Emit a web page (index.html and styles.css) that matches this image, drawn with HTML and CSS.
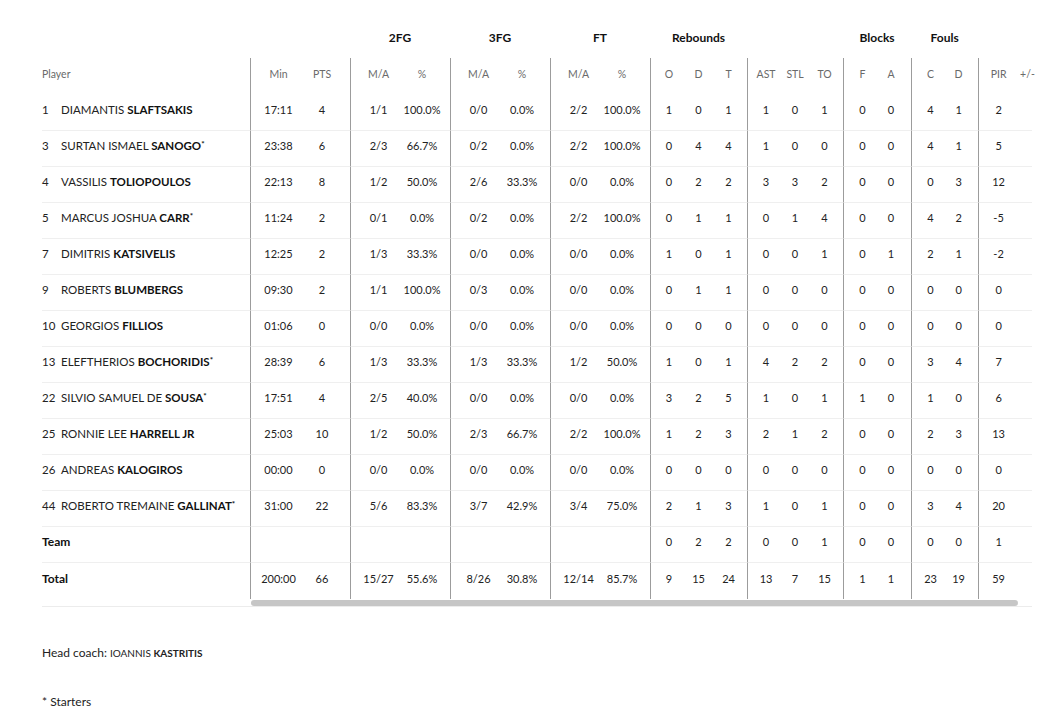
FILE: index.html
```html
<!DOCTYPE html>
<html lang="en">
<head>
<meta charset="utf-8">
<title>Box score</title>
<link rel="stylesheet" href="styles.css">
</head>
<body>
<div class="page">
  <div class="box">
    <table class="stats">
      <colgroup>
        <col class="c-player"><col class="c50"><col class="c50">
        <col class="c50"><col class="c50"><col class="c50"><col class="c50"><col class="c50"><col class="c50">
        <col class="c33"><col class="c31"><col class="c33">
        <col class="c33"><col class="c30"><col class="c33">
        <col class="c34"><col class="c34">
        <col class="c34"><col class="c33">
        <col class="c40"><col class="c14">
      </colgroup>
      <thead>
        <tr class="groups">
          <th></th><th colspan="2"></th>
          <th colspan="2">2FG</th><th colspan="2">3FG</th><th colspan="2">FT</th>
          <th colspan="3">Rebounds</th><th colspan="3"></th>
          <th colspan="2">Blocks</th><th colspan="2">Fouls</th><th colspan="2"></th>
        </tr>
        <tr class="labels">
          <th class="player">Player</th>
          <th class="gs pl">Min</th><th class="pr">PTS</th>
          <th class="gs pl">M/A</th><th class="pr">%</th>
          <th class="gs pl">M/A</th><th class="pr">%</th>
          <th class="gs pl">M/A</th><th class="pr">%</th>
          <th class="gs pl4">O</th><th>D</th><th class="pr4">T</th>
          <th class="gs pl4">AST</th><th>STL</th><th class="pr4">TO</th>
          <th class="gs pl4">F</th><th class="pr6">A</th>
          <th class="gs pl4">C</th><th class="pr6">D</th>
          <th class="gs">PIR</th><th class="pm">+/-</th>
        </tr>
      </thead>
      <tbody>
        <tr><td class="player"><span class="num">1</span>DIAMANTIS <b>SLAFTSAKIS</b></td>
          <td class="gs pl">17:11</td><td class="pr">4</td>
          <td class="gs pl">1/1</td><td class="pr">100.0%</td>
          <td class="gs pl">0/0</td><td class="pr">0.0%</td>
          <td class="gs pl">2/2</td><td class="pr">100.0%</td>
          <td class="gs pl4">1</td><td>0</td><td class="pr4">1</td>
          <td class="gs pl4">1</td><td>0</td><td class="pr4">1</td>
          <td class="gs pl4">0</td><td class="pr6">0</td>
          <td class="gs pl4">4</td><td class="pr6">1</td>
          <td class="gs">2</td><td class="pm"></td></tr>
        <tr><td class="player"><span class="num">3</span>SURTAN ISMAEL <b>SANOGO<sup>*</sup></b></td>
          <td class="gs pl">23:38</td><td class="pr">6</td>
          <td class="gs pl">2/3</td><td class="pr">66.7%</td>
          <td class="gs pl">0/2</td><td class="pr">0.0%</td>
          <td class="gs pl">2/2</td><td class="pr">100.0%</td>
          <td class="gs pl4">0</td><td>4</td><td class="pr4">4</td>
          <td class="gs pl4">1</td><td>0</td><td class="pr4">0</td>
          <td class="gs pl4">0</td><td class="pr6">0</td>
          <td class="gs pl4">4</td><td class="pr6">1</td>
          <td class="gs">5</td><td class="pm"></td></tr>
        <tr><td class="player"><span class="num">4</span>VASSILIS <b>TOLIOPOULOS</b></td>
          <td class="gs pl">22:13</td><td class="pr">8</td>
          <td class="gs pl">1/2</td><td class="pr">50.0%</td>
          <td class="gs pl">2/6</td><td class="pr">33.3%</td>
          <td class="gs pl">0/0</td><td class="pr">0.0%</td>
          <td class="gs pl4">0</td><td>2</td><td class="pr4">2</td>
          <td class="gs pl4">3</td><td>3</td><td class="pr4">2</td>
          <td class="gs pl4">0</td><td class="pr6">0</td>
          <td class="gs pl4">0</td><td class="pr6">3</td>
          <td class="gs">12</td><td class="pm"></td></tr>
        <tr><td class="player"><span class="num">5</span>MARCUS JOSHUA <b>CARR<sup>*</sup></b></td>
          <td class="gs pl">11:24</td><td class="pr">2</td>
          <td class="gs pl">0/1</td><td class="pr">0.0%</td>
          <td class="gs pl">0/2</td><td class="pr">0.0%</td>
          <td class="gs pl">2/2</td><td class="pr">100.0%</td>
          <td class="gs pl4">0</td><td>1</td><td class="pr4">1</td>
          <td class="gs pl4">0</td><td>1</td><td class="pr4">4</td>
          <td class="gs pl4">0</td><td class="pr6">0</td>
          <td class="gs pl4">4</td><td class="pr6">2</td>
          <td class="gs">-5</td><td class="pm"></td></tr>
        <tr><td class="player"><span class="num">7</span>DIMITRIS <b>KATSIVELIS</b></td>
          <td class="gs pl">12:25</td><td class="pr">2</td>
          <td class="gs pl">1/3</td><td class="pr">33.3%</td>
          <td class="gs pl">0/0</td><td class="pr">0.0%</td>
          <td class="gs pl">0/0</td><td class="pr">0.0%</td>
          <td class="gs pl4">1</td><td>0</td><td class="pr4">1</td>
          <td class="gs pl4">0</td><td>0</td><td class="pr4">1</td>
          <td class="gs pl4">0</td><td class="pr6">1</td>
          <td class="gs pl4">2</td><td class="pr6">1</td>
          <td class="gs">-2</td><td class="pm"></td></tr>
        <tr><td class="player"><span class="num">9</span>ROBERTS <b>BLUMBERGS</b></td>
          <td class="gs pl">09:30</td><td class="pr">2</td>
          <td class="gs pl">1/1</td><td class="pr">100.0%</td>
          <td class="gs pl">0/3</td><td class="pr">0.0%</td>
          <td class="gs pl">0/0</td><td class="pr">0.0%</td>
          <td class="gs pl4">0</td><td>1</td><td class="pr4">1</td>
          <td class="gs pl4">0</td><td>0</td><td class="pr4">0</td>
          <td class="gs pl4">0</td><td class="pr6">0</td>
          <td class="gs pl4">0</td><td class="pr6">0</td>
          <td class="gs">0</td><td class="pm"></td></tr>
        <tr><td class="player"><span class="num">10</span>GEORGIOS <b>FILLIOS</b></td>
          <td class="gs pl">01:06</td><td class="pr">0</td>
          <td class="gs pl">0/0</td><td class="pr">0.0%</td>
          <td class="gs pl">0/0</td><td class="pr">0.0%</td>
          <td class="gs pl">0/0</td><td class="pr">0.0%</td>
          <td class="gs pl4">0</td><td>0</td><td class="pr4">0</td>
          <td class="gs pl4">0</td><td>0</td><td class="pr4">0</td>
          <td class="gs pl4">0</td><td class="pr6">0</td>
          <td class="gs pl4">0</td><td class="pr6">0</td>
          <td class="gs">0</td><td class="pm"></td></tr>
        <tr><td class="player"><span class="num">13</span>ELEFTHERIOS <b>BOCHORIDIS<sup>*</sup></b></td>
          <td class="gs pl">28:39</td><td class="pr">6</td>
          <td class="gs pl">1/3</td><td class="pr">33.3%</td>
          <td class="gs pl">1/3</td><td class="pr">33.3%</td>
          <td class="gs pl">1/2</td><td class="pr">50.0%</td>
          <td class="gs pl4">1</td><td>0</td><td class="pr4">1</td>
          <td class="gs pl4">4</td><td>2</td><td class="pr4">2</td>
          <td class="gs pl4">0</td><td class="pr6">0</td>
          <td class="gs pl4">3</td><td class="pr6">4</td>
          <td class="gs">7</td><td class="pm"></td></tr>
        <tr><td class="player"><span class="num">22</span>SILVIO SAMUEL DE <b>SOUSA<sup>*</sup></b></td>
          <td class="gs pl">17:51</td><td class="pr">4</td>
          <td class="gs pl">2/5</td><td class="pr">40.0%</td>
          <td class="gs pl">0/0</td><td class="pr">0.0%</td>
          <td class="gs pl">0/0</td><td class="pr">0.0%</td>
          <td class="gs pl4">3</td><td>2</td><td class="pr4">5</td>
          <td class="gs pl4">1</td><td>0</td><td class="pr4">1</td>
          <td class="gs pl4">1</td><td class="pr6">0</td>
          <td class="gs pl4">1</td><td class="pr6">0</td>
          <td class="gs">6</td><td class="pm"></td></tr>
        <tr><td class="player"><span class="num">25</span>RONNIE LEE <b>HARRELL JR</b></td>
          <td class="gs pl">25:03</td><td class="pr">10</td>
          <td class="gs pl">1/2</td><td class="pr">50.0%</td>
          <td class="gs pl">2/3</td><td class="pr">66.7%</td>
          <td class="gs pl">2/2</td><td class="pr">100.0%</td>
          <td class="gs pl4">1</td><td>2</td><td class="pr4">3</td>
          <td class="gs pl4">2</td><td>1</td><td class="pr4">2</td>
          <td class="gs pl4">0</td><td class="pr6">0</td>
          <td class="gs pl4">2</td><td class="pr6">3</td>
          <td class="gs">13</td><td class="pm"></td></tr>
        <tr><td class="player"><span class="num">26</span>ANDREAS <b>KALOGIROS</b></td>
          <td class="gs pl">00:00</td><td class="pr">0</td>
          <td class="gs pl">0/0</td><td class="pr">0.0%</td>
          <td class="gs pl">0/0</td><td class="pr">0.0%</td>
          <td class="gs pl">0/0</td><td class="pr">0.0%</td>
          <td class="gs pl4">0</td><td>0</td><td class="pr4">0</td>
          <td class="gs pl4">0</td><td>0</td><td class="pr4">0</td>
          <td class="gs pl4">0</td><td class="pr6">0</td>
          <td class="gs pl4">0</td><td class="pr6">0</td>
          <td class="gs">0</td><td class="pm"></td></tr>
        <tr><td class="player"><span class="num">44</span>ROBERTO TREMAINE <b>GALLINAT<sup>*</sup></b></td>
          <td class="gs pl">31:00</td><td class="pr">22</td>
          <td class="gs pl">5/6</td><td class="pr">83.3%</td>
          <td class="gs pl">3/7</td><td class="pr">42.9%</td>
          <td class="gs pl">3/4</td><td class="pr">75.0%</td>
          <td class="gs pl4">2</td><td>1</td><td class="pr4">3</td>
          <td class="gs pl4">1</td><td>0</td><td class="pr4">1</td>
          <td class="gs pl4">0</td><td class="pr6">0</td>
          <td class="gs pl4">3</td><td class="pr6">4</td>
          <td class="gs">20</td><td class="pm"></td></tr>
        <tr class="sum"><td class="player">Team</td>
          <td class="gs pl"></td><td class="pr"></td>
          <td class="gs pl"></td><td class="pr"></td>
          <td class="gs pl"></td><td class="pr"></td>
          <td class="gs pl"></td><td class="pr"></td>
          <td class="gs pl4">0</td><td>2</td><td class="pr4">2</td>
          <td class="gs pl4">0</td><td>0</td><td class="pr4">1</td>
          <td class="gs pl4">0</td><td class="pr6">0</td>
          <td class="gs pl4">0</td><td class="pr6">0</td>
          <td class="gs">1</td><td class="pm"></td></tr>
        <tr class="sum last"><td class="player">Total</td>
          <td class="gs pl">200:00</td><td class="pr">66</td>
          <td class="gs pl">15/27</td><td class="pr">55.6%</td>
          <td class="gs pl">8/26</td><td class="pr">30.8%</td>
          <td class="gs pl">12/14</td><td class="pr">85.7%</td>
          <td class="gs pl4">9</td><td>15</td><td class="pr4">24</td>
          <td class="gs pl4">13</td><td>7</td><td class="pr4">15</td>
          <td class="gs pl4">1</td><td class="pr6">1</td>
          <td class="gs pl4">23</td><td class="pr6">19</td>
          <td class="gs">59</td><td class="pm"></td></tr>
      </tbody>
    </table>
    <div class="scrollbar"><div class="thumb"></div></div>
  </div>
  <p class="coach">Head coach: <span class="cname">IOANNIS <b>KASTRITIS</b></span></p>
  <p class="starters">* Starters</p>
</div>
</body>
</html>
```

FILE: styles.css
```css
html, body {
  margin: 0;
  padding: 0;
  background: #ffffff;
}

body {
  font-family: Lato, "Noto Sans", sans-serif;
  color: #1e1e1e;
}

.page {
  padding: 20px 0 0 42px;
}

.box {
  width: 990px;
  border-bottom: 1px solid #ececec;
}

.stats {
  width: 990px;
  table-layout: fixed;
  border-collapse: separate;
  border-spacing: 0;
  font-size: 11px;
}

.c-player { width: 208px; }
.c50 { width: 50px; }
.c40 { width: 40px; }
.c34 { width: 34px; }
.c33 { width: 33px; }
.c31 { width: 31px; }
.c30 { width: 30px; }
.c14 { width: 14px; }

.stats th,
.stats td {
  padding: 0;
  text-align: center;
  white-space: nowrap;
  box-sizing: border-box;
}

.groups th {
  height: 38px;
  padding-bottom: 3px;
  font-size: 12px;
  font-weight: 700;
  color: #111;
}

.labels th {
  height: 37px;
  padding-bottom: 5px;
  font-weight: 400;
  font-size: 10.5px;
  color: #6a6a6a;
}

.stats td {
  height: 36px;
  padding-bottom: 6px;
  border-bottom: 1px solid #efefef;
  color: #222;
}

.stats tr.last td {
  border-bottom: none;
}

.stats .player {
  text-align: left;
  padding-left: 0;
}

.stats td.player {
  font-size: 11.5px;
  color: #222;
}

.stats td.player b {
  font-weight: 700;
  color: #111;
}

.stats td.player sup {
  font-size: 8px;
  vertical-align: 3px;
  line-height: 0;
}

.num {
  display: inline-block;
  min-width: 15px;
  margin-right: 4px;
}

.stats .sum td.player {
  font-size: 12px;
  font-weight: 700;
  color: #111;
}

.gs { border-left: 1px solid #9c9c9c; }
.pl { padding-left: 6px !important; }
.pr { padding-right: 6px !important; }
.pl4 { padding-left: 4px !important; }
.pr4 { padding-right: 4px !important; }
.pr6 { padding-right: 6px !important; }

.stats .pm {
  text-align: left;
  padding-left: 2px;
  overflow: visible;
}

.scrollbar {
  margin-left: 209px;
  height: 7px;
  padding-top: 1px;
  box-sizing: border-box;
}

.thumb {
  width: 767px;
  height: 6px;
  border-radius: 3px;
  background: #c6c6c6;
}

.coach {
  margin: 38px 0 0 0;
  font-size: 12px;
  color: #222;
}

.cname {
  font-size: 10px;
}

.cname b {
  font-weight: 700;
}

.starters {
  margin: 34px 0 0 0;
  font-size: 12px;
  color: #222;
}
```
